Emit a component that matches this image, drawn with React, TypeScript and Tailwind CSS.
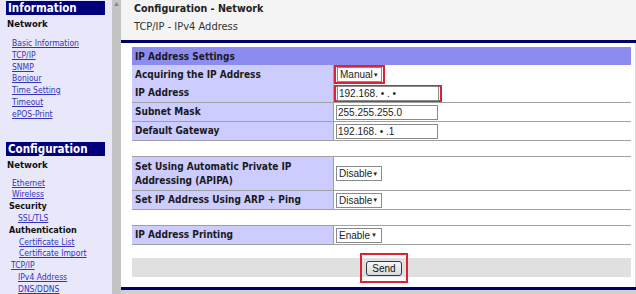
import React from "react";

const UI = "font-['DejaVu_Sans_Condensed','Liberation_Sans',sans-serif]";
const ARIAL = "font-['Liberation_Sans',Arial,sans-serif]";

function NavLink({ children, indent = 12 }: { children: React.ReactNode; indent?: number }) {
  return (
    <div className="h-[11.8px] leading-[11.8px] text-[8.5px] text-[#3333bb] underline" style={{ paddingLeft: indent }}>
      {children}
    </div>
  );
}

function NavHeading({ children }: { children: React.ReactNode }) {
  return <div className="h-[11.8px] leading-[11.8px] pl-[9px] text-[9px] font-bold text-[#111]">{children}</div>;
}

function Sidebar() {
  return (
    <div className={`w-[112px] shrink-0 bg-[#e8e8fa] pt-[1px] ${UI}`}>
      <div className="ml-[6px] w-[99px] h-[14px] bg-[#00007a] pl-[2px] text-[11.5px] leading-[14px] font-bold text-white">
        Information
      </div>
      <div className="mt-[3px] h-[12px] pl-[7px] text-[9.5px] leading-[12px] font-bold text-[#111]">Network</div>
      <div className="mt-[8px]">
        <NavLink>Basic Information</NavLink>
        <NavLink>TCP/IP</NavLink>
        <NavLink>SNMP</NavLink>
        <NavLink>Bonjour</NavLink>
        <NavLink>Time Setting</NavLink>
        <NavLink>Timeout</NavLink>
        <NavLink>ePOS-Print</NavLink>
      </div>
      <div className="mt-[21px] ml-[6px] w-[99px] h-[14px] bg-[#00007a] pl-[2px] text-[11.5px] leading-[14px] font-bold text-white">
        Configuration
      </div>
      <div className="mt-[3px] h-[12px] pl-[7px] text-[9.5px] leading-[12px] font-bold text-[#111]">Network</div>
      <div className="mt-[7px]">
        <NavLink>Ethernet</NavLink>
        <NavLink>Wireless</NavLink>
        <NavHeading>Security</NavHeading>
        <NavLink indent={18}>SSL/TLS</NavLink>
        <NavHeading>Authentication</NavHeading>
        <NavLink indent={19}>Certificate List</NavLink>
        <NavLink indent={19}>Certificate Import</NavLink>
        <NavLink indent={11}>TCP/IP</NavLink>
        <NavLink indent={18}>IPv4 Address</NavLink>
        <NavLink indent={18}>DNS/DDNS</NavLink>
      </div>
    </div>
  );
}

function Select({ value, width = 46 }: { value: string; width?: number }) {
  return (
    <span
      className={`inline-flex items-center justify-between h-[15px] border border-[#8a8a8a] bg-white pl-[2px] pr-[4px] text-[10px] text-[#222] ${ARIAL}`}
      style={{ width }}
    >
      {value}
      <span className="text-[6px] leading-none">▼</span>
    </span>
  );
}

function TextBox({ value }: { value: string }) {
  return (
    <span className={`inline-flex items-center w-[102px] h-[15px] border border-[#8a8a8a] bg-white pl-[1px] text-[10px] text-[#222] ${ARIAL}`}>
      {value}
    </span>
  );
}

function Row({ label, children, bare, tall }: { label: React.ReactNode; children: React.ReactNode; bare?: boolean; tall?: boolean }) {
  return (
    <div className={`grid grid-cols-[201px_1fr] border-b border-[#a0a0a0] ${tall ? "h-[34px]" : "h-[19px]"}`}>
      <div className="bg-[#ccccff] flex items-center pl-[3px] text-[10px] leading-[14px] font-bold text-[#1a1a1a]">{label}</div>
      <div className={`bg-white border-l border-[#a0a0a0] flex items-center ${bare ? "" : "pl-[2px]"}`}>{children}</div>
    </div>
  );
}

export default function App() {
  return (
    <div className={`w-[636px] h-[294px] overflow-hidden flex bg-white ${UI}`}>
      <Sidebar />

      {/* fake scrollbar */}
      <div className="w-[9px] shrink-0 bg-[#c4c4c4] flex justify-center pt-[2px]">
        <svg width="5" height="4" viewBox="0 0 5 4">
          <path d="M2.5 0 L5 4 L0 4 Z" fill="#8a8a8a" />
        </svg>
      </div>

      <div className="flex-1 flex flex-col min-w-0">
        <div className="h-[40px] bg-[#f4f4f4] pl-[13px] pt-[2px]">
          <div className="text-[10.6px] leading-[13px] font-bold text-[#222]">Configuration - Network</div>
          <div className="mt-[5px] text-[11px] leading-[13px] text-[#333]">TCP/IP - IPv4 Address</div>
        </div>
        <div className="h-[3px] bg-[#000066]" />

        <div className="flex-1 bg-white border-r border-[#d8d8d8] pl-[11px] pr-[4px] pt-[4px]">
          <div className="h-[18px] bg-[#8c8cf0] pl-[3px] flex items-center text-[10px] font-bold text-[#1a1a1a]">
            IP Address Settings
          </div>
          <Row label="Acquiring the IP Address" bare>
            <span className="inline-flex items-center h-[19px] border-2 border-[#dd2233] px-[1px]">
              <Select value="Manual" width={45} />
            </span>
          </Row>
          <Row label="IP Address" bare>
            <span className="inline-flex items-center h-[17px] border-2 border-[#dd2233] px-[1px]">
              <TextBox value="192.168. • . •" />
            </span>
          </Row>
          <Row label="Subnet Mask">
            <TextBox value="255.255.255.0" />
          </Row>
          <Row label="Default Gateway">
            <TextBox value="192.168. • .1" />
          </Row>

          <div className="mt-[15px] border-t border-[#a0a0a0]">
            <Row label={<span>Set Using Automatic Private IP<br />Addressing (APIPA)</span>} tall>
              <Select value="Disable" />
            </Row>
            <Row label="Set IP Address Using ARP + Ping">
              <Select value="Disable" />
            </Row>
          </div>

          <div className="mt-[15px] border-t border-[#a0a0a0]">
            <Row label="IP Address Printing">
              <Select value="Enable" />
            </Row>
          </div>

          <div className="mt-[13px] h-[19px] bg-[#e0e0e0] flex items-center justify-center pl-[5px] pt-[1px]">
            <span className="relative inline-flex">
              <button
                className={`w-[36px] h-[15px] rounded-[3px] border border-[#2a3a4a] bg-gradient-to-b from-[#f6f6f6] to-[#dadada] text-[10px] leading-[13px] text-[#111] ${ARIAL}`}
              >
                Send
              </button>
              <span className="absolute -left-[6px] -right-[6px] -top-[8px] -bottom-[7px] border-2 border-[#dd2233]" />
            </span>
          </div>
        </div>

        <div className="h-[3px] bg-[#000066]" />
        <div className="h-[4px] bg-[#d0d0d8]" />
      </div>
    </div>
  );
}
